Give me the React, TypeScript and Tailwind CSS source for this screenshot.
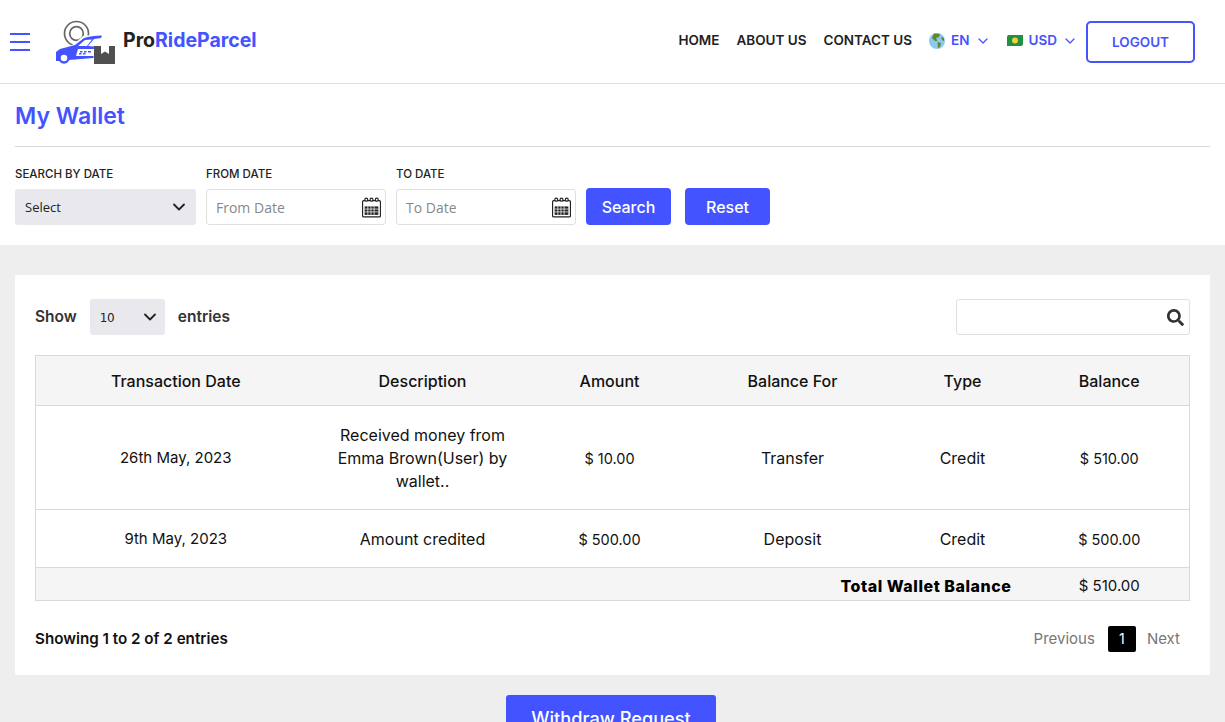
import type { ReactNode } from "react";
import { ChevronDown } from "lucide-react";
import { FaSearch } from "react-icons/fa";

const BLUE = "text-[#4353ff]";

const CalendarIcon = () => (
  <svg width="21" height="21" viewBox="0 0 20 20" fill="none" stroke="#222" strokeWidth="1.1">
    <rect x="1.5" y="3.5" width="17" height="15.500" rx="1" />
    <circle cx="5" cy="2.500" r="1.400" fill="#fff" />
    <circle cx="10" cy="2.500" r="1.400" fill="#fff" />
    <circle cx="15" cy="2.500" r="1.400" fill="#fff" />
    <rect x="3.500" y="9" width="13" height="8" fill="#222" stroke="none" />
    <path d="M3.500 11.500h13M3.500 14.200h13M6.500 9v8M9.500 9v8M12.500 9v8" stroke="#fff" strokeWidth="0.7" />
  </svg>
);

const Logo = () => (
  <svg width="60" height="46" viewBox="0 0 60 46" fill="none">
    <circle cx="21.500" cy="14.500" r="12" stroke="#666" strokeWidth="1.700" />
    <circle cx="21.500" cy="14.500" r="6.800" stroke="#666" strokeWidth="1.700" />
    <path d="M14 28 L20 24 L28 17 L46 15 L46 30 L14 30 Z" fill="#fff" />
    <path
      d="M1 33 L5 30 L20 26 L29 19 Q36 16.500 47 16.500 L46 19 L39 20 L33 27 L39 27.500 L38.500 39 L14 41 L5 42 L1 42 Z"
      fill="#4353ff"
    />
    <path d="M23 27 L30 21 L37 20.500 L32 27 Z" fill="#fff" />
    <path d="M23 30 H39 V37 H21 Z" fill="#fff" />
    <path d="M25 32h2.500v1.500H25zM29 32h2.500v1.500H29zM33 32h3v1.500h-3zM24 34h2.500v1.500H24zM28 34h2.500v1.500H28z" fill="#4353ff" />
    <circle cx="9" cy="39" r="4.500" fill="#fff" stroke="#4353ff" strokeWidth="2.500" />
    <rect x="39" y="27" width="21" height="18" fill="#505050" />
    <path d="M46 27h8v8l-4-2.500-4 2.500z" fill="#fff" />
  </svg>
);

const NavSelect = ({ icon, label }: { icon: ReactNode; label: string }) => (
  <div className={`flex items-center text-[13.500px] font-semibold ${BLUE}`}>
    {icon}
    <span className="ml-[6px]">{label}</span>
    <ChevronDown size={16} strokeWidth={1.900} className="ml-[5px]" />
  </div>
);

const Globe = () => (
  <svg width="16" height="16" viewBox="0 0 16 16">
    <circle cx="8" cy="8" r="8" fill="#8ec8f0" />
    <path d="M5 0.500 L11 1 L10 4 L7 5 L8.500 8 L6 8 L3 5 Z" fill="#5d8a2d" />
    <path d="M8.500 9 L12 10 L11 14 L9 15 Z" fill="#5d8a2d" />
    <path d="M12 4 L15 5 L15 8 L13 7 Z" fill="#5d8a2d" />
  </svg>
);

const Money = () => (
  <svg width="16" height="11" viewBox="0 0 16 11">
    <path d="M2 0h14v9a2 2 0 0 1-2 2H0V2a2 2 0 0 1 2-2z" fill="#1f9140" />
    <circle cx="8" cy="5.500" r="3" fill="#f5cf3c" />
  </svg>
);

const FieldLabel = ({ children }: { children: string }) => (
  <label className="mb-[6px] block text-[11.500px] leading-[17px] font-medium text-[#222]">{children}</label>
);

const DateField = ({ placeholder }: { placeholder: string }) => (
  <div>
    <FieldLabel>{placeholder.toUpperCase()}</FieldLabel>
    <div className="flex h-9 w-[180px] items-center justify-between rounded-[3px] border border-[#e0e0e0] pr-[3px] pl-[9px] font-['Open_Sans',sans-serif] text-sm text-[#888]">
      <span className="pt-[1px]">{placeholder}</span>
      <CalendarIcon />
    </div>
  </div>
);

const rows = [
  {
    date: "26th May, 2023",
    description: "Received money from Emma Brown(User) by wallet..",
    amount: "$ 10.00",
    balanceFor: "Transfer",
    type: "Credit",
    balance: "$ 510.00",
    height: "h-[104px]",
  },
  {
    date: "9th May, 2023",
    description: "Amount credited",
    amount: "$ 500.00",
    balanceFor: "Deposit",
    type: "Credit",
    balance: "$ 500.00",
    height: "h-[58px]",
  },
];

const headers = ["Transaction Date", "Description", "Amount", "Balance For", "Type", "Balance"];

export default function App() {
  return (
    <div className="h-screen overflow-hidden bg-[#eeeeee] font-['Inter',sans-serif] text-[#222]">
      {/* Header */}
      <header className="flex h-[84px] items-center border-b border-[#dedede] bg-white pr-[30px] pl-[10px]">
        <div className="flex w-5 flex-col gap-[6px]">
          <span className="h-[2px] bg-[#4353ff]" />
          <span className="h-[2px] bg-[#4353ff]" />
          <span className="h-[2px] bg-[#4353ff]" />
        </div>
        <div className="ml-[25px] flex items-center">
          <Logo />
          <span className="mb-[2px] ml-2 text-[19.500px] font-bold text-[#222]">
            Pro<span className={BLUE}>RideParcel</span>
          </span>
        </div>
        <nav className="ml-auto flex items-center text-[13.500px] font-semibold text-[#222]">
          <div className="mb-[2px] flex items-center">
            <span>HOME</span>
            <span className="ml-[17px]">ABOUT US</span>
            <span className="ml-[17px]">CONTACT US</span>
            <div className="ml-[17px]">
              <NavSelect icon={<Globe />} label="EN" />
            </div>
            <div className="ml-[16px]">
              <NavSelect icon={<Money />} label="USD" />
            </div>
          </div>
          <button className="ml-[8px] h-[42px] w-[109px] rounded-[5px] border-2 border-[#4353ff] pt-[2px] text-[13.500px] font-semibold text-[#4353ff]">
            LOGOUT
          </button>
        </nav>
      </header>

      {/* Title and filters */}
      <section className="bg-white px-[15px] pb-5">
        <div className="border-b border-[#d9d9d9] pt-[17px] pb-[15px]">
          <h1 className={`text-[23px] leading-[30px] font-semibold ${BLUE}`}>My Wallet</h1>
        </div>
        <div className="mt-[19px] flex items-end gap-[10px]">
          <div>
            <FieldLabel>SEARCH BY DATE</FieldLabel>
            <div className="flex h-9 w-[181px] items-center justify-between rounded-[3px] bg-[#e9e9ed] pr-[7px] pl-[10px] font-['Open_Sans',sans-serif] text-[13px] text-[#222]">
              <span className="pt-[1px]">Select</span>
              <ChevronDown size={20} strokeWidth={2.200} />
            </div>
          </div>
          <DateField placeholder="From Date" />
          <DateField placeholder="To Date" />
          <button className="h-[37px] w-[85px] rounded-[4px] bg-[#4353ff] text-base font-medium text-white">
            Search
          </button>
          <button className="ml-1 h-[37px] w-[85px] rounded-[4px] bg-[#4353ff] text-base font-medium text-white">
            Reset
          </button>
        </div>
      </section>

      {/* Wallet table */}
      <main className="flex flex-col items-center px-[15px] pt-[30px]">
        <div className="h-[400px] w-full bg-white px-5 pt-6">
          <div className="flex items-center justify-between">
            <div className="flex items-center text-[15.500px] font-semibold text-[#333]">
              Show
              <div className="mr-[13px] ml-[13px] flex h-9 w-[75px] items-center justify-between rounded-[3px] bg-[#e9e9ed] pr-[5px] pl-[10px] font-['DejaVu_Sans',sans-serif] text-xs font-normal tracking-[-0.5px] text-[#222]">
                <span className="pt-[1px]">10</span>
                <ChevronDown size={20} strokeWidth={2.200} />
              </div>
              entries
            </div>
            <div className="flex h-9 w-[234px] items-center justify-end rounded-[3px] border border-[#e0e0e0] pr-[5px]">
              <FaSearch size={17} className="text-[#333]" />
            </div>
          </div>

          <table className="mt-5 w-full table-fixed border border-[#d9d9d9] text-center text-base text-[#111]">
            <colgroup>
              <col className="w-[280px]" />
              <col className="w-[214px]" />
              <col className="w-[160px]" />
              <col className="w-[206px]" />
              <col className="w-[134px]" />
              <col />
            </colgroup>
            <thead>
              <tr className="h-[50px] border-b border-[#d9d9d9] bg-[#f5f5f5]">
                {headers.map((header) => (
                  <th key={header} className="font-medium">
                    {header}
                  </th>
                ))}
              </tr>
            </thead>
            <tbody>
              {rows.map((row) => (
                <tr key={row.date} className={`border-b border-[#d9d9d9] ${row.height}`}>
                  <td className="pt-[2px] text-[15px]">{row.date}</td>
                  <td className="px-4 pt-[1px] leading-[23px]">{row.description}</td>
                  <td className="pt-[2px] text-[14.500px]">{row.amount}</td>
                  <td>{row.balanceFor}</td>
                  <td>{row.type}</td>
                  <td className="pt-[2px] text-[14.500px]">{row.balance}</td>
                </tr>
              ))}
              <tr className="h-[33px] bg-[#f5f5f5]">
                <td colSpan={5} className="pt-[4px] pr-[18px] text-right font-extrabold tracking-[0.55px] text-black">
                  Total Wallet Balance
                </td>
                <td className="pt-[5px] text-[15px]">$ 510.00</td>
              </tr>
            </tbody>
          </table>

          <div className="mt-[25px] flex items-center justify-between text-[15px]">
            <span className="text-[15.200px] font-semibold text-[#111]">Showing 1 to 2 of 2 entries</span>
            <div className="flex items-center pr-[10px] text-[#777]">
              Previous
              <span className="mr-[11px] ml-[13px] flex h-[26px] w-7 items-center justify-center rounded-[2px] bg-black text-sm text-white">
                1
              </span>
              Next
            </div>
          </div>
        </div>

        <button className="mt-5 mr-[3px] h-[48px] w-[210px] shrink-0 rounded-[3px] bg-[#4353ff] text-[18.200px] font-medium text-white">
          Withdraw Request
        </button>
      </main>
    </div>
  );
}
